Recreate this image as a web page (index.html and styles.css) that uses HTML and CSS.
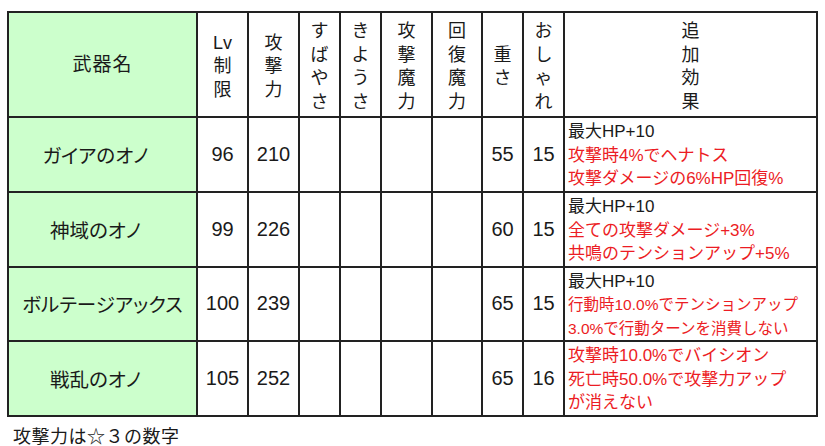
FILE: index.html
```html
<!DOCTYPE html>
<html lang="ja">
<head>
<meta charset="utf-8">
<link rel="stylesheet" href="styles.css">
</head>
<body>
<table class="weapons">
  <colgroup>
    <col class="c-name"><col class="c-num"><col class="c-num"><col class="c-sm"><col class="c-sm"><col class="c-num"><col class="c-num2"><col class="c-sm"><col class="c-sm"><col class="c-eff">
  </colgroup>
  <thead>
    <tr class="head">
      <th class="name-head">武器名</th>
      <th>Lv<br>制<br>限</th>
      <th>攻<br>撃<br>力</th>
      <th>す<br>ば<br>や<br>さ</th>
      <th>き<br>よ<br>う<br>さ</th>
      <th>攻<br>撃<br>魔<br>力</th>
      <th>回<br>復<br>魔<br>力</th>
      <th>重<br>さ</th>
      <th>お<br>し<br>ゃ<br>れ</th>
      <th>追<br>加<br>効<br>果</th>
    </tr>
  </thead>
  <tbody>
    <tr class="r1">
      <td class="name short">ガイアのオノ</td>
      <td class="num">96</td>
      <td class="num">210</td>
      <td></td><td></td><td></td><td></td>
      <td class="num">55</td>
      <td class="num">15</td>
      <td class="eff"><span class="blk">最大HP+10</span><br><span class="red">攻撃時4%でヘナトス</span><br><span class="red">攻撃ダメージの6%HP回復%</span></td>
    </tr>
    <tr class="r2">
      <td class="name short">神域のオノ</td>
      <td class="num">99</td>
      <td class="num">226</td>
      <td></td><td></td><td></td><td></td>
      <td class="num">60</td>
      <td class="num">15</td>
      <td class="eff"><span class="blk">最大HP+10</span><br><span class="red">全ての攻撃ダメージ+3%</span><br><span class="red">共鳴のテンションアップ+5%</span></td>
    </tr>
    <tr class="r3">
      <td class="name">ボルテージアックス</td>
      <td class="num">100</td>
      <td class="num">239</td>
      <td></td><td></td><td></td><td></td>
      <td class="num">65</td>
      <td class="num">15</td>
      <td class="eff"><span class="blk">最大HP+10</span><br><span class="red small">行動時10.0%でテンションアップ</span><br><span class="red small">3.0%で行動ターンを消費しない</span></td>
    </tr>
    <tr class="r4">
      <td class="name short">戦乱のオノ</td>
      <td class="num">105</td>
      <td class="num">252</td>
      <td></td><td></td><td></td><td></td>
      <td class="num">65</td>
      <td class="num">16</td>
      <td class="eff"><span class="red">攻撃時10.0%でバイシオン</span><br><span class="red">死亡時50.0%で攻撃力アップ</span><br><span class="red">が消えない</span></td>
    </tr>
  </tbody>
</table>
<p class="note">攻撃力は☆３の数字</p>
</body>
</html>
```

FILE: styles.css
```css
html, body {
  margin: 0;
  padding: 0;
  background: #ffffff;
}
body {
  font-family: "Liberation Sans", "Noto Sans CJK JP", sans-serif;
  color: #1a1a1a;
}
.weapons {
  border-collapse: collapse;
  table-layout: fixed;
  width: 811px;
  margin: 11px 0 0 7px;
}
.c-name { width: 189px; }
.c-num { width: 51px; }
.c-num2 { width: 50px; }
.c-sm { width: 41px; }
.c-eff { width: 253px; }
.weapons th,
.weapons td {
  border: 2px solid #222222;
  padding: 0;
  vertical-align: middle;
}
.weapons th {
  font-weight: normal;
  font-size: 18px;
  line-height: 23.5px;
  text-align: center;
  padding-top: 5px;
}
.head { height: 105px; }
.r1 { height: 75px; }
.r2 { height: 74px; }
.r3 { height: 74px; }
.r4 { height: 73px; }
.weapons .name-head {
  background: #ccffcc;
  font-size: 19px;
  letter-spacing: 1px;
  padding-top: 0;
}
.name {
  background: #ccffcc;
  text-align: center;
  font-size: 19.5px;
  font-feature-settings: "palt";
}
.weapons .short {
  padding-right: 14px;
}
.num {
  text-align: center;
  font-size: 20px;
}
.weapons .eff {
  font-size: 17px;
  line-height: 23.5px;
  padding-left: 3px;
  padding-top: 2px;
  white-space: nowrap;
}
.small { font-size: 15.5px; }
.red { color: #ec1c24; }
.blk { color: #1a1a1a; }
.note {
  margin: 5px 0 0 13px;
  font-size: 18px;
  letter-spacing: 0.5px;
}
```
